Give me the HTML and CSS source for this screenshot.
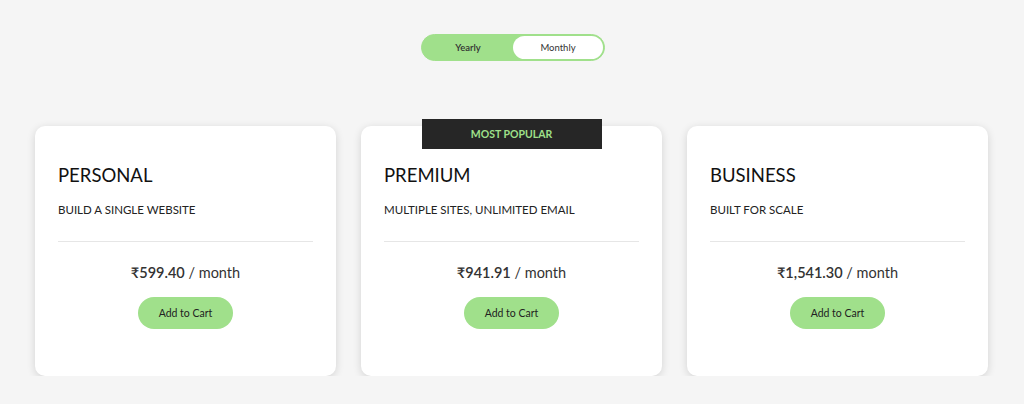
FILE: index.html
```html
<!DOCTYPE html>
<html>
<head>
<meta charset="utf-8">
<link rel="stylesheet" href="styles.css">
</head>
<body>
<div class="page">
  <div class="toggle">
    <button class="opt active">Yearly</button>
    <button class="opt">Monthly</button>
  </div>
  <div class="cards">
    <div class="card">
      <h2 class="title">PERSONAL</h2>
      <p class="sub">BUILD A SINGLE WEBSITE</p>
      <hr class="rule">
      <p class="price"><strong>₹599.40</strong> / month</p>
      <button class="cart">Add to Cart</button>
    </div>
    <div class="card">
      <div class="badge">MOST POPULAR</div>
      <h2 class="title">PREMIUM</h2>
      <p class="sub">MULTIPLE SITES, UNLIMITED EMAIL</p>
      <hr class="rule">
      <p class="price"><strong>₹941.91</strong> / month</p>
      <button class="cart">Add to Cart</button>
    </div>
    <div class="card">
      <h2 class="title">BUSINESS</h2>
      <p class="sub">BUILT FOR SCALE</p>
      <hr class="rule">
      <p class="price"><strong>₹1,541.30</strong> / month</p>
      <button class="cart">Add to Cart</button>
    </div>
  </div>
</div>
</body>
</html>
```
FILE: styles.css
```css
* { box-sizing: border-box; }
body {
  margin: 0;
  background: #f5f5f5;
  font-family: Lato, "Noto Sans", "DejaVu Sans", sans-serif;
  color: #222;
}
.page {
  display: flex;
  flex-direction: column;
  align-items: center;
  padding-top: 34px;
}
.toggle {
  display: flex;
  width: 184px;
  height: 27px;
  background: #a0e08b;
  border-radius: 14px;
  padding: 1px;
  border: 1px solid #a0e08b;
  transform: translateX(1px);
}
.opt {
  flex: 1;
  border: none;
  background: transparent;
  font-family: inherit;
  font-size: 9.5px;
  color: #333;
  border-radius: 13px;
  padding: 0;
}
.opt.active {
  font-weight: 600;
}
.opt:not(.active) {
  background: #fff;
}
.cards {
  display: grid;
  grid-template-columns: repeat(3, 301px);
  column-gap: 25px;
  margin-top: 65px;
  margin-right: 1px;
}
.card {
  position: relative;
  background: #fff;
  border-radius: 10px;
  box-shadow: 0 2px 8px rgba(0,0,0,0.14);
  padding: 38px 23px 47px;
  display: flex;
  flex-direction: column;
}
.badge {
  position: absolute;
  top: -7px;
  left: 50%;
  transform: translateX(-50%);
  width: 180px;
  height: 30px;
  background: #262626;
  color: #9fe08a;
  font-weight: 700;
  font-size: 10.5px;
  display: flex;
  align-items: center;
  justify-content: center;
}
.title {
  margin: 0;
  font-size: 18.5px;
  font-weight: 400;
  line-height: 22px;
  color: #111;
}
.sub {
  margin: 17px 0 0;
  font-size: 11.5px;
  line-height: 14px;
  color: #222;
}
.rule {
  margin: 24px 0 0;
  border: none;
  border-top: 1px solid #e6e6e6;
}
.price {
  margin: 22px 0 0;
  text-align: center;
  font-size: 14.5px;
  line-height: 18px;
  color: #333;
}
.price strong {
  font-weight: 600;
}
.cart {
  align-self: center;
  margin-top: 15px;
  width: 95px;
  height: 32px;
  border: none;
  border-radius: 16px;
  background: #a0e08b;
  font-family: inherit;
  font-size: 10.5px;
  color: #222;
}
```
